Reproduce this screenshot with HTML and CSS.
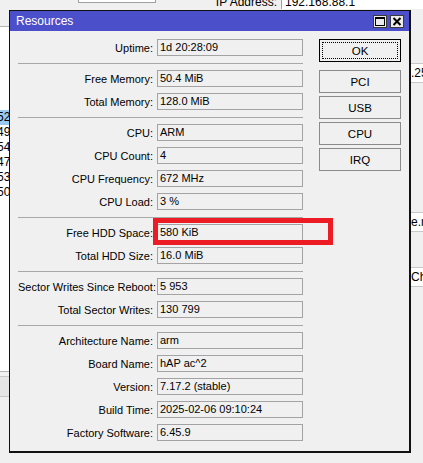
FILE: index.html
```html
<!DOCTYPE html>
<html lang="en">
<head>
    <meta charset="UTF-8">
    <title>Resources</title>
    <link rel="stylesheet" href="styles.css">
</head>
<body>
    <!-- windows lying behind the dialog -->
    <div class="desk">
        <div class="bg-box"></div>
        <div class="bg-label">IP Address:</div>
        <div class="bg-field">192.168.88.1</div>
        <div class="bg-list">
            <div class="bg-item selected">52</div>
            <div class="bg-item">49</div>
            <div class="bg-item">54</div>
            <div class="bg-item">47</div>
            <div class="bg-item">53</div>
            <div class="bg-item">50</div>
        </div>
        <div class="bg-tab">T</div>
        <div class="bg-right">
            <div class="bg-cell r1">.25</div>
            <div class="bg-cell r2">e.n</div>
            <div class="bg-cell r3">Che</div>
        </div>
    </div>

    <div class="window">
        <div class="titlebar">
            <span class="title">Resources</span>
            <div class="title-btns">
                <span class="tbtn">
                    <svg width="12" height="11" viewBox="0 0 12 11"><rect x="1.5" y="1.5" width="9" height="8" fill="none" stroke="#000" stroke-width="1"/><line x1="1" y1="2" x2="11" y2="2" stroke="#000" stroke-width="2"/></svg>
                </span>
                <span class="tbtn">
                    <svg width="12" height="11" viewBox="0 0 12 11"><path d="M2.5 2 L9.5 9 M9.5 2 L2.5 9" stroke="#000" stroke-width="2"/></svg>
                </span>
            </div>
        </div>
        <div class="content">
            <div class="fields">
                <div class="row"><span class="label">Uptime:</span><span class="value">1d 20:28:09</span></div>
                <div class="sep"></div>
                <div class="row"><span class="label">Free Memory:</span><span class="value">50.4 MiB</span></div>
                <div class="row"><span class="label">Total Memory:</span><span class="value">128.0 MiB</span></div>
                <div class="sep"></div>
                <div class="row"><span class="label">CPU:</span><span class="value">ARM</span></div>
                <div class="row"><span class="label">CPU Count:</span><span class="value">4</span></div>
                <div class="row"><span class="label">CPU Frequency:</span><span class="value">672 MHz</span></div>
                <div class="row"><span class="label">CPU Load:</span><span class="value">3 %</span></div>
                <div class="sep"></div>
                <div class="row"><span class="label">Free HDD Space:</span><span class="value">580 KiB</span></div>
                <div class="row"><span class="label">Total HDD Size:</span><span class="value">16.0 MiB</span></div>
                <div class="sep"></div>
                <div class="row"><span class="label">Sector Writes Since Reboot:</span><span class="value">5 953</span></div>
                <div class="row"><span class="label">Total Sector Writes:</span><span class="value">130 799</span></div>
                <div class="sep"></div>
                <div class="row"><span class="label">Architecture Name:</span><span class="value">arm</span></div>
                <div class="row"><span class="label">Board Name:</span><span class="value">hAP ac^2</span></div>
                <div class="row"><span class="label">Version:</span><span class="value">7.17.2 (stable)</span></div>
                <div class="row"><span class="label">Build Time:</span><span class="value">2025-02-06 09:10:24</span></div>
                <div class="row"><span class="label">Factory Software:</span><span class="value">6.45.9</span></div>
            </div>
            <div class="buttons">
                <button class="btn default"><span>OK</span></button>
                <div class="btn-group">
                    <button class="btn">PCI</button>
                    <button class="btn">USB</button>
                    <button class="btn">CPU</button>
                    <button class="btn">IRQ</button>
                </div>
            </div>
        </div>
    </div>

    <!-- highlight around the free space value -->
    <div class="mark"></div>
</body>
</html>
```

FILE: styles.css
```css
body {
    margin: 0;
    width: 423px;
    height: 463px;
    overflow: hidden;
    position: relative;
    background-color: #f0f0f0;
    font-family: "Liberation Sans", Arial, sans-serif;
    font-size: 11px;
    color: #000;
}

/* background windows */

.desk {
    position: absolute;
    inset: 0;
}

.bg-box {
    position: absolute;
    left: 78px;
    top: -10px;
    width: 76px;
    height: 11px;
    background-color: #fff;
    border: 1px solid #a0a0a0;
}

.bg-label {
    position: absolute;
    left: 200px;
    top: -5px;
    width: 77px;
    text-align: right;
    font-size: 12px;
}

.bg-field {
    position: absolute;
    left: 281px;
    top: -8px;
    width: 142px;
    height: 17px;
    padding-left: 3px;
    padding-top: 3px;
    box-sizing: border-box;
    background-color: #fff;
    border-left: 1px solid #a0a0a0;
    font-size: 12px;
}

.bg-list {
    position: absolute;
    left: 0;
    top: 26px;
    width: 10px;
    height: 346px;
    background-color: #fff;
    border-top: 1px solid #b4b4b4;
    border-bottom: 1px solid #b4b4b4;
    padding-top: 83px;
    box-sizing: border-box;
}

.bg-item {
    height: 15px;
    line-height: 15px;
    font-size: 12px;
    margin-left: -3px;
}

.bg-item.selected {
    background-color: #99c9ef;
}

.bg-tab {
    position: absolute;
    left: 0;
    top: 376px;
    width: 14px;
    height: 21px;
    line-height: 21px;
    padding-left: 10px;
    box-sizing: border-box;
    background-color: #e6e6e6;
    border-top: 1px solid #c8c8c8;
    border-bottom: 1px solid #c8c8c8;
    color: #6a5a8a;
    font-size: 12px;
}

.bg-right {
    position: absolute;
    left: 411px;
    top: 10px;
    width: 12px;
    height: 300px;
}

.bg-cell {
    position: absolute;
    left: 0;
    width: 30px;
    height: 18px;
    line-height: 18px;
    font-size: 12px;
    background-color: #fff;
    border-top: 1px solid #c8c8c8;
    border-bottom: 1px solid #c8c8c8;
}

.r1 { top: 53px; }
.r2 { top: 202px; }
.r3 { top: 257px; }

/* the resources dialog */

.window {
    position: absolute;
    left: 9px;
    top: 10px;
    width: 402px;
    height: 443px;
    box-sizing: border-box;
    border: 1px solid #111;
    border-right-width: 2px;
    border-bottom-width: 2px;
    background-color: #f0f0f0;
    display: flex;
    flex-direction: column;
}

.titlebar {
    height: 20px;
    background-color: #4b4fc9;
    display: flex;
    align-items: center;
    justify-content: space-between;
    padding: 0 5px 0 6px;
}

.title {
    color: #fff;
    font-size: 12px;
}

.title-btns {
    display: flex;
    gap: 3px;
    margin-top: 1px;
}

.tbtn {
    width: 14px;
    height: 13px;
    box-sizing: border-box;
    border: 1px solid #3a3a3a;
    background-color: #ececec;
    display: flex;
    align-items: center;
    justify-content: center;
}

.tbtn svg {
    display: block;
}

.content {
    display: flex;
    padding: 8px 0 0 8px;
}

.fields {
    width: 285px;
    display: flex;
    flex-direction: column;
    gap: 6px;
}

.row {
    display: flex;
    align-items: center;
    gap: 4px;
    height: 17px;
}

.label {
    width: 135px;
    text-align: right;
    white-space: nowrap;
}

.value {
    width: 146px;
    height: 17px;
    line-height: 15px;
    box-sizing: border-box;
    border: 1px solid #a3a3a3;
    padding-left: 2px;
    white-space: nowrap;
}

.sep {
    height: 1px;
    margin-top: 1px;
    background-color: #a8a8a8;
}

.buttons {
    margin-left: 16px;
    width: 82px;
    display: flex;
    flex-direction: column;
    gap: 8px;
}

.btn-group {
    display: flex;
    flex-direction: column;
    gap: 3px;
}

.btn {
    height: 23px;
    padding: 0;
    font-family: inherit;
    font-size: 11.5px;
    color: #000;
    background-color: #f0f0f0;
    border: 1px solid #8a8a8a;
}

.btn.default {
    border-color: #000;
    padding: 2px;
}

.btn.default span {
    display: block;
    height: 100%;
    line-height: 16px;
    box-sizing: border-box;
    border: 1px dotted #000;
}

.mark {
    position: absolute;
    left: 153px;
    top: 218px;
    width: 180px;
    height: 27px;
    box-sizing: border-box;
    border: 5px solid #ed1c24;
}
```
